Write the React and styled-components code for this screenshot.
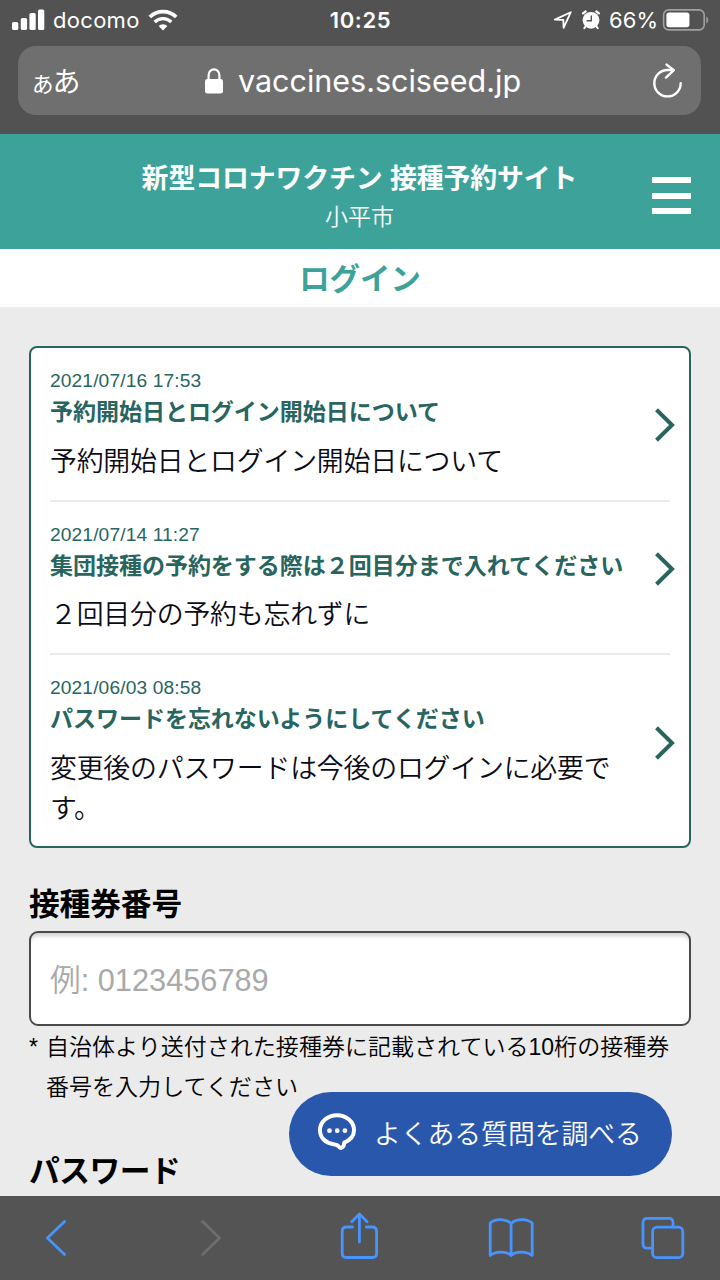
import styled, { createGlobalStyle } from "styled-components";

const notices = [
  {
    date: "2021/07/16 17:53",
    title: "予約開始日とログイン開始日について",
    body: "予約開始日とログイン開始日について",
    up: -3,
  },
  {
    date: "2021/07/14 11:27",
    title: "集団接種の予約をする際は２回目分まで入れてください",
    body: "２回目分の予約も忘れずに",
    up: 16,
  },
  {
    date: "2021/06/03 08:58",
    title: "パスワードを忘れないようにしてください",
    body: "変更後のパスワードは今後のログインに必要です。",
    up: 16,
  },
];

const Signal = () => (
  <svg width="33" height="22" viewBox="0 0 33 22" fill="#fff">
    <rect x="0" y="13" width="6.3" height="8" rx="1.6" />
    <rect x="8.8" y="9" width="6.3" height="12" rx="1.6" />
    <rect x="17.4" y="4" width="6.3" height="17" rx="1.6" />
    <rect x="26" y="0.5" width="6.3" height="20.5" rx="1.6" />
  </svg>
);

const Wifi = () => (
  <svg width="30" height="22" viewBox="0 0 30 22" fill="none" stroke="#fff">
    <path d="M1.8 8A19 19 0 0 1 28.2 8" strokeWidth="3.8" />
    <path d="M6.7 13A12 12 0 0 1 23.3 13" strokeWidth="3.4" />
    <path d="M15 21.600L10.600 17A6.600 6.600 0 0 1 19.400 17Z" fill="#fff" stroke="none" />
  </svg>
);

const Location = () => (
  <svg width="20" height="20" viewBox="0 0 20 20" fill="none">
    <path
      d="M1.8 9.6L17.8 2.2L10.6 17.8L10.3 9.8Z"
      stroke="#fff"
      strokeWidth="1.8"
      strokeLinejoin="round"
    />
  </svg>
);

const Alarm = () => (
  <svg width="20" height="20" viewBox="0 0 20 20">
    <circle cx="10" cy="10.3" r="8.400" fill="#fff" />
    <path
      d="M2 3.4L4.600 1.500M18 3.4L15.400 1.500"
      stroke="#fff"
      strokeWidth="2.2"
      strokeLinecap="round"
    />
    <path d="M4.5 16.5L3.300 18.200M15.5 16.5L16.700 18.200" stroke="#fff" strokeWidth="2" strokeLinecap="round" />
    <path d="M10.3 5.4V10.8H5.6" fill="none" stroke="#525252" strokeWidth="1.4" />
  </svg>
);

const Battery = () => (
  <svg width="47" height="22" viewBox="0 0 47 22">
    <rect x="1.6" y="0.9" width="40.6" height="20" rx="5" fill="none" stroke="#a0a0a0" strokeWidth="1.6" />
    <rect x="4.4" y="3.6" width="23" height="14.6" rx="2.6" fill="#fff" />
    <path d="M44.300 7.4C46.800 8.6 46.800 13.2 44.300 14.4Z" fill="#a0a0a0" />
  </svg>
);

const Lock = () => (
  <svg width="18" height="26" viewBox="0 0 18 26">
    <rect x="0" y="11" width="18" height="14.6" rx="2.4" fill="#fff" />
    <path d="M3.6 12V7.2A5.4 5.8 0 0 1 14.4 7.2V12" fill="none" stroke="#fff" strokeWidth="2.2" />
  </svg>
);

const Reload = () => (
  <svg width="32" height="36" viewBox="0 0 32 36" fill="none" stroke="#fff" strokeWidth="2.4">
    <path d="M28.7 20.2A13.2 13.2 0 1 1 15.5 7H21.6" strokeLinecap="round" />
    <path d="M14.6 1.6L21.8 7.2L14 14.6" strokeLinecap="round" strokeLinejoin="round" />
  </svg>
);

const Chat = () => (
  <svg width="40" height="40" viewBox="0 0 40 40">
    <path
      d="M20 3.2C10.6 3.2 3 9.6 3 18.2C3 26 9 31.3 16.5 32.2C19.5 32.6 20.5 32.900 21.5 34.2C22.5 35.6 23 36.3 24.4 35.8C26.5 35.2 27.2 34 27.2 30.6C33 28.2 37 24.2 37 18.2C37 9.6 29.4 3.2 20 3.2Z"
      fill="none"
      stroke="#fff"
      strokeWidth="4"
      strokeLinejoin="round"
    />
    <circle cx="12.5" cy="18.7" r="2.4" fill="#fff" />
    <circle cx="20.2" cy="18.7" r="2.4" fill="#fff" />
    <circle cx="27.9" cy="18.7" r="2.4" fill="#fff" />
  </svg>
);

export default function App() {
  return (
    <Page>
      <GlobalStyle />
      <BrowserTop>
        <StatusBar>
          <StatusGroup>
            <Signal />
            <Carrier>docomo</Carrier>
            <Wifi />
          </StatusGroup>
          <Clock>10:25</Clock>
          <StatusGroup $end>
            <Location />
            <Alarm />
            <Percent>66%</Percent>
            <Battery />
          </StatusGroup>
        </StatusBar>
        <AddressBar>
          <TextSize>
            <small>あ</small>あ
          </TextSize>
          <Address>
            <Lock />
            <span>vaccines.sciseed.jp</span>
          </Address>
          <Reload />
        </AddressBar>
      </BrowserTop>

      <Header>
        <HeaderText>
          <h1>新型コロナワクチン 接種予約サイト</h1>
          <p>小平市</p>
        </HeaderText>
        <MenuButton aria-label="menu">
          <i />
          <i />
          <i />
        </MenuButton>
      </Header>
      <PageTitle>ログイン</PageTitle>

      <Main>
        <NoticeList>
          {notices.map((notice) => (
            <Notice key={notice.date}>
              <NoticeText>
                <div className="date">{notice.date}</div>
                <div className="title">{notice.title}</div>
                <div className="body">{notice.body}</div>
              </NoticeText>
              <Arrow $up={notice.up} viewBox="0 0 20 34">
                <path d="M1.500 1.800L17 17L1.500 32.200" />
              </Arrow>
            </Notice>
          ))}
        </NoticeList>
        <Label>接種券番号</Label>
        <Input placeholder="例: 0123456789" />
        <Hint>
          <span>*</span>
          <p>自治体より送付された接種券に記載されている10桁の接種券番号を入力してください</p>
        </Hint>
        <Label $next>パスワード</Label>
        <FaqButton>
          <Chat />
          <span>よくある質問を調べる</span>
        </FaqButton>
      </Main>

      <Toolbar>
        <ToolIcon viewBox="0 0 50 84">
          <path d="M33.6 25.4L16.4 42L33.6 58.4" />
        </ToolIcon>
        <ToolIcon viewBox="0 0 50 84" $disabled>
          <path d="M19.6 25.4L36.6 42L19.6 58.4" />
        </ToolIcon>
        <ToolIcon viewBox="0 0 50 84">
          <path d="M18.5 31H12.5Q8.2 31 8.2 35.3V57.2Q8.2 61.5 12.5 61.5H38.3Q42.6 61.5 42.6 57.2V35.3Q42.6 31 38.3 31H32.3" />
          <path d="M25.4 46V19M17.700 25.700L25.4 18L33.100 25.700" />
        </ToolIcon>
        <ToolIcon viewBox="0 0 50 84">
          <path d="M25.1 27.5C20 22.3 9 22.3 4.2 27V59.5C9 55.4 20 54.6 25.1 59.5C30 54.6 41 55.4 46.2 59.5V27C41 22.3 30 22.3 25.1 27.5ZM25.1 27.5V59.5" />
        </ToolIcon>
        <ToolIcon viewBox="0 0 50 84">
          <path d="M14 52.1H10.200Q6 52.1 6 47.900V26.500Q6 22.300 10.200 22.300H31.8Q36 22.300 36 26.500V31" />
          <rect x="15.600" y="31.200" width="30.200" height="30.400" rx="4.2" />
        </ToolIcon>
      </Toolbar>
    </Page>
  );
}

const GlobalStyle = createGlobalStyle`
  * {
    box-sizing: border-box;
  }
  body {
    margin: 0;
    font-family: "Liberation Sans", "Noto Sans CJK JP", sans-serif;
  }
  h1, p {
    margin: 0;
  }
`;

const Page = styled.div`
  width: 720px;
  height: 1280px;
  display: flex;
  flex-direction: column;
  overflow: hidden;
  background-color: #ebebeb;
`;

const BrowserTop = styled.div`
  height: 134px;
  flex-shrink: 0;
  padding: 0 19px 0 18px;
  background-color: #525252;
  color: white;
  font-family: Inter, "Noto Sans CJK JP", sans-serif;
`;

const StatusBar = styled.div`
  height: 46px;
  margin: 0 -8px 0 -6px;
  padding-bottom: 7px;
  display: grid;
  grid-template-columns: 1fr auto 1fr;
  align-items: center;
`;

const StatusGroup = styled.div`
  display: flex;
  align-items: center;
  justify-content: ${(props) => (props.$end ? "flex-end" : "flex-start")};
  gap: 8px;
  svg {
    flex-shrink: 0;
  }
`;

const Carrier = styled.span`
  font-size: 22px;
  letter-spacing: 0.3px;
`;

const Clock = styled.span`
  font-size: 22px;
  font-weight: 600;
  letter-spacing: 0.6px;
`;

const Percent = styled.span`
  font-size: 22px;
  margin-right: -4px;
`;

const AddressBar = styled.div`
  height: 69px;
  padding: 0 17px 0 14px;
  display: grid;
  grid-template-columns: 60px 1fr 32px;
  align-items: center;
  border-radius: 18px;
  background-color: #6f6f6f;
`;

const TextSize = styled.div`
  padding-top: 4px;
  font-size: 28px;
  line-height: 40px;
  white-space: nowrap;
  small {
    margin-right: -1px;
    font-size: 21.5px;
  }
`;

const Address = styled.div`
  display: flex;
  align-items: center;
  justify-content: center;
  gap: 15px;
  margin-right: 18px;
  font-size: 30.5px;
`;

const Header = styled.header`
  height: 115px;
  flex-shrink: 0;
  display: grid;
  grid-template-columns: 1fr 39px;
  padding: 0 29px 0 68px;
  background-color: #3da39a;
  color: white;
`;

const HeaderText = styled.div`
  padding-top: 25px;
  padding-left: 1px;
  margin-right: 2px;
  text-align: center;
  h1 {
    font-size: 26.88px;
    font-weight: 700;
    line-height: 40px;
    letter-spacing: -0.1px;
  }
  p {
    font-size: 23.04px;
    font-weight: 350;
    line-height: 36px;
  }
`;

const MenuButton = styled.button`
  height: 37px;
  margin-top: 43px;
  padding: 0;
  display: flex;
  flex-direction: column;
  justify-content: space-between;
  border: none;
  background: none;
  i {
    width: 39px;
    height: 6px;
    background-color: white;
  }
`;

const PageTitle = styled.div`
  height: 58px;
  flex-shrink: 0;
  background-color: white;
  color: #3da39a;
  font-size: 30.4px;
  font-weight: 700;
  line-height: 61px;
  text-align: center;
`;

const Main = styled.main`
  flex: 1;
  min-height: 0;
  padding: 39px 29px 0;
  position: relative;
`;

const NoticeList = styled.div`
  height: 502px;
  padding: 0 19px;
  border: 2px solid #28655f;
  border-radius: 8px;
  background-color: white;
`;

const Notice = styled.div`
  height: 153.6px;
  padding-top: 19.2px;
  display: flex;
  justify-content: space-between;
  border-bottom: 2px solid #ebebeb;
  &:last-child {
    height: 192px;
    border-bottom: none;
  }
`;

const NoticeText = styled.div`
  width: 588px;
  color: #28655f;
  div.date {
    font-size: 19.2px;
    line-height: 28.8px;
    letter-spacing: 0.12px;
  }
  div.title {
    margin-top: -1px;
    font-size: 23.04px;
    font-weight: 700;
    line-height: 34.56px;
    letter-spacing: -0.05px;
  }
  div.body {
    margin-top: 12px;
    font-size: 26.88px;
    font-weight: 350;
    line-height: 40.32px;
    letter-spacing: -0.19px;
    color: #0b0b16;
  }
`;

const Arrow = styled.svg`
  width: 20px;
  height: 34px;
  flex-shrink: 0;
  align-self: center;
  margin: 0 -5px ${(props) => props.$up + 19}px 0;
  fill: none;
  stroke: #28655f;
  stroke-width: 4px;
`;

const Label = styled.div`
  margin-top: ${(props) => (props.$next ? 42 : 34)}px;
  font-size: 30.72px;
  font-weight: 700;
  line-height: 46px;
  letter-spacing: ${(props) => (props.$next ? -0.5 : -0.1)}px;
  color: black;
`;

const Input = styled.input`
  display: block;
  width: 100%;
  height: 95px;
  margin-top: 3px;
  padding: 4px 19px 0;
  border: 2px solid #4a4a4a;
  border-radius: 9px;
  background-color: white;
  box-shadow: inset 0 6px 4px -3px rgba(0, 0, 0, 0.18);
  font-family: inherit;
  font-size: 30.72px;
  outline: none;
  &::placeholder {
    color: #a9a9a9;
    font-weight: 350;
  }
`;

const Hint = styled.div`
  display: flex;
  padding-top: 1px;
  font-size: 23.04px;
  font-weight: 350;
  line-height: 40px;
  color: black;
  span {
    width: 17px;
  }
  p {
    width: 632px;
  }
`;

const FaqButton = styled.button`
  position: absolute;
  right: 48px;
  bottom: 20px;
  width: 383px;
  height: 84px;
  padding: 0 0 4px 28px;
  display: flex;
  align-items: center;
  gap: 17px;
  border: none;
  border-radius: 42px;
  background-color: #2957ac;
  color: white;
  font-family: inherit;
  font-size: 26.88px;
  font-weight: 350;
  letter-spacing: -0.1px;
  white-space: nowrap;
`;

const Toolbar = styled.nav`
  height: 84px;
  flex-shrink: 0;
  padding: 0 32.6px 0 31px;
  display: flex;
  justify-content: space-between;
  background-color: #545454;
`;

const ToolIcon = styled.svg`
  width: 50px;
  height: 84px;
  fill: none;
  stroke: ${(props) => (props.$disabled ? "#6e6e6e" : "#4794ff")};
  stroke-width: 2.8px;
  stroke-linecap: round;
  stroke-linejoin: round;
`;
